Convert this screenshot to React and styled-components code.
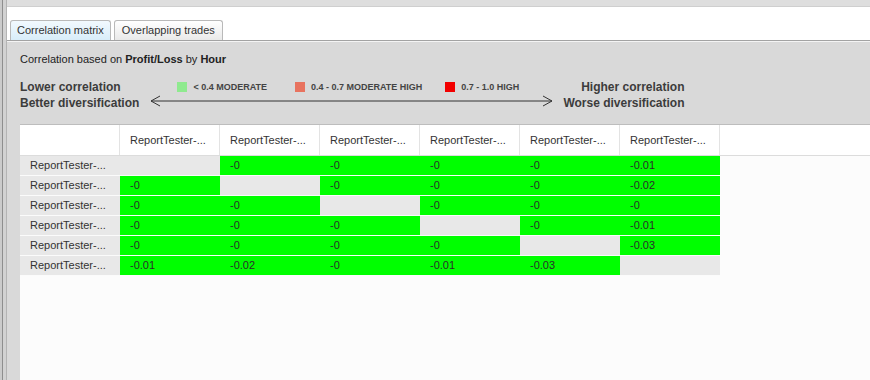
import React from "react";
import styled, { createGlobalStyle } from "styled-components";

const Global = createGlobalStyle`
  html, body { margin: 0; padding: 0; background: #fff; }
  body { font-family: "Liberation Sans", Arial, sans-serif; font-size: 11px; color: #333; }
  #root { height: 380px; }
`;

const Frame = styled.div`
  display: flex;
  width: 870px;
  height: 380px;
  overflow: hidden;
`;

const SideRail = styled.div`
  flex: 0 0 7px;
  background: linear-gradient(
    to right,
    #cbcbcb 0 2px,
    #8e8e8e 2px 3px,
    #d2d2d2 3px 6px,
    #b4b4b4 6px 7px
  );
`;

const Main = styled.div`
  flex: 1;
  display: flex;
  flex-direction: column;
  min-width: 0;
`;

const TopStrip = styled.div`
  height: 6px;
  background: #dedede;
  border-bottom: 1px solid #cfcfcf;
`;

const TabBar = styled.div`
  height: 33px;
  display: flex;
  align-items: flex-end;
  gap: 3px;
  padding-left: 3px;
  background: #fff;
`;

const Tab = styled.div`
  height: 19px;
  line-height: 19px;
  padding: 0 ${(p) => (p.$active ? 6 : 7)}px;
  border: 1px solid #b9b9b9;
  border-bottom: none;
  border-radius: 3px 3px 0 0;
  color: #333;
  background: ${(p) =>
    p.$active
      ? "linear-gradient(to bottom, #f2f9fe, #d8edf9)"
      : "linear-gradient(to bottom, #ffffff, #e9e9e9)"};
  white-space: nowrap;
`;

const Panel = styled.div`
  flex: 1;
  display: flex;
  flex-direction: column;
  border-top: 1px solid #a3a3a3;
  box-shadow: inset 0 1px 0 #f4f4f4;
  background: #d9d9d9;
  padding-left: 13px;
  min-height: 0;
`;

const Summary = styled.div`
  margin-top: 10px;
  line-height: 16px;
  color: #222;
  b { font-weight: bold; }
`;

const LegendRow = styled.div`
  display: flex;
  align-items: flex-start;
  margin-top: 12px;
  height: 32px;
`;

const SideLabel = styled.div`
  font-weight: bold;
  font-size: 12px;
  line-height: 16px;
  color: #3c3c3c;
  text-align: ${(p) => (p.$right ? "right" : "left")};
  white-space: nowrap;
`;

const Scale = styled.div`
  display: flex;
  flex-direction: column;
  width: 403px;
  margin: 0 10px 0 11px;
`;

const ScaleItems = styled.div`
  display: flex;
  align-items: center;
  height: 16px;
  padding-left: 27px;
`;

const ScaleItem = styled.div`
  display: flex;
  align-items: center;
  gap: 6px;
  margin-right: ${(p) => p.$gap}px;
  font-size: 9px;
  font-weight: bold;
  color: #444;
  white-space: nowrap;
`;

const Swatch = styled.span`
  width: 10px;
  height: 10px;
  background: ${(p) => p.$color};
`;

const TableArea = styled.div`
  flex: 1;
  margin-top: 13px;
  border-top: 1px solid #bdbdbd;
  background: #fcfcfc;
`;

const HeaderRow = styled.div`
  display: flex;
  height: 30px;
  background: #fff;
  border-bottom: 1px solid #dcdcdc;
`;

const HeaderCell = styled.div`
  box-sizing: border-box;
  width: 100px;
  padding-left: 10px;
  line-height: 30px;
  border-right: 1px solid #e3e3e3;
  color: #333;
  white-space: nowrap;
`;

const Row = styled.div`
  display: flex;
`;

const Cell = styled.div`
  box-sizing: border-box;
  width: 100px;
  height: 20px;
  line-height: 19px;
  padding-left: 10px;
  border-bottom: 1px solid #fbfbfb;
  background: ${(p) => (p.$kind === "value" ? "#00ff00" : "#e8e8e8")};
  color: ${(p) => (p.$kind === "value" ? "#2c2c2c" : "#333")};
  white-space: nowrap;
`;

const names = Array.from({ length: 6 }, () => "ReportTester-...");
const matrix = [
  [null, "-0", "-0", "-0", "-0", "-0.01"],
  ["-0", null, "-0", "-0", "-0", "-0.02"],
  ["-0", "-0", null, "-0", "-0", "-0"],
  ["-0", "-0", "-0", null, "-0", "-0.01"],
  ["-0", "-0", "-0", "-0", null, "-0.03"],
  ["-0.01", "-0.02", "-0", "-0.01", "-0.03", null],
];

function ArrowLine() {
  return (
    <svg width="403" height="12" viewBox="0 0 403 12">
      <line x1="1" y1="6" x2="402" y2="6" stroke="#333" strokeWidth="1" />
      <polyline points="10,1 1,6 10,11" fill="none" stroke="#333" strokeWidth="1" />
      <polyline points="393,1 402,6 393,11" fill="none" stroke="#333" strokeWidth="1" />
    </svg>
  );
}

export default function App() {
  return (
    <>
      <Global />
      <Frame>
        <SideRail />
        <Main>
          <TopStrip />
          <TabBar>
            <Tab $active>Correlation matrix</Tab>
            <Tab>Overlapping trades</Tab>
          </TabBar>
          <Panel>
            <Summary>
              Correlation based on <b>Profit/Loss</b> by <b>Hour</b>
            </Summary>
            <LegendRow>
              <SideLabel>
                Lower correlation
                <br />
                Better diversification
              </SideLabel>
              <Scale>
                <ScaleItems>
                  <ScaleItem $gap={28}>
                    <Swatch $color="#8fea8f" />
                    &lt; 0.4 MODERATE
                  </ScaleItem>
                  <ScaleItem $gap={23}>
                    <Swatch $color="#e8735f" />
                    0.4 - 0.7 MODERATE HIGH
                  </ScaleItem>
                  <ScaleItem $gap={0}>
                    <Swatch $color="#f20000" />
                    0.7 - 1.0 HIGH
                  </ScaleItem>
                </ScaleItems>
                <ArrowLine />
              </Scale>
              <SideLabel $right>
                Higher correlation
                <br />
                Worse diversification
              </SideLabel>
            </LegendRow>
            <TableArea>
              <HeaderRow>
                <HeaderCell />
                {names.map((n, i) => (
                  <HeaderCell key={i}>{n}</HeaderCell>
                ))}
              </HeaderRow>
              {matrix.map((row, r) => (
                <Row key={r}>
                  <Cell $kind="head">{names[r]}</Cell>
                  {row.map((v, c) => (
                    <Cell key={c} $kind={v === null ? "diag" : "value"}>
                      {v}
                    </Cell>
                  ))}
                </Row>
              ))}
            </TableArea>
          </Panel>
        </Main>
      </Frame>
    </>
  );
}
